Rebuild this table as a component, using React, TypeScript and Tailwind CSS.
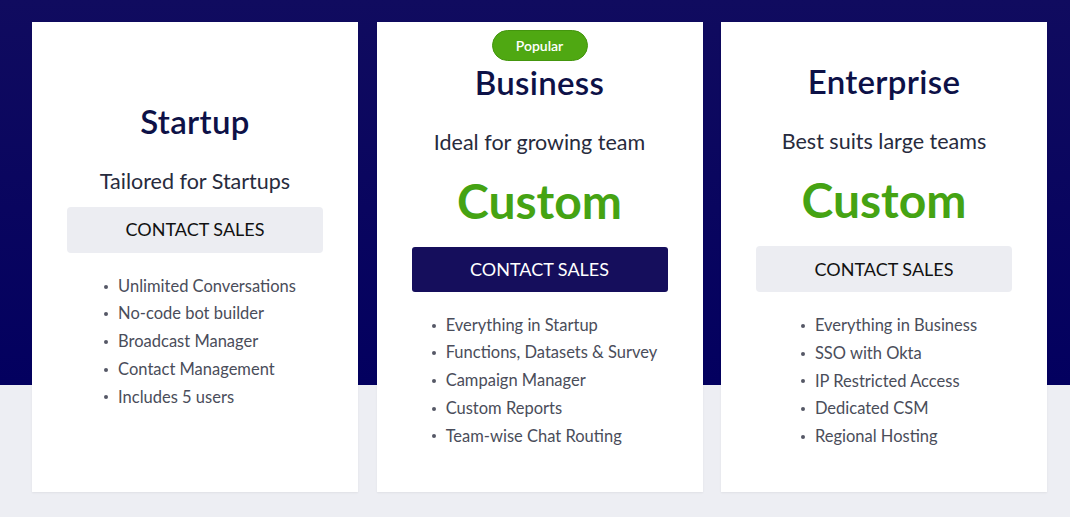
import React from "react";

interface Plan {
  name: string;
  tagline: string;
  price?: string;
  popular?: boolean;
  features: string[];
}

const plans: Plan[] = [
  {
    name: "Startup",
    tagline: "Tailored for Startups",
    features: [
      "Unlimited Conversations",
      "No-code bot builder",
      "Broadcast Manager",
      "Contact Management",
      "Includes 5 users",
    ],
  },
  {
    name: "Business",
    tagline: "Ideal for growing team",
    price: "Custom",
    popular: true,
    features: [
      "Everything in Startup",
      "Functions, Datasets & Survey",
      "Campaign Manager",
      "Custom Reports",
      "Team-wise Chat Routing",
    ],
  },
  {
    name: "Enterprise",
    tagline: "Best suits large teams",
    price: "Custom",
    features: [
      "Everything in Business",
      "SSO with Okta",
      "IP Restricted Access",
      "Dedicated CSM",
      "Regional Hosting",
    ],
  },
];

const PlanCard = ({ plan }: { plan: Plan }) => (
  <div className="relative flex h-[470px] w-[326px] flex-col justify-center bg-white px-[35px] text-center shadow-[0_1px_2px_rgba(0,0,0,0.06)]">
    {plan.popular && (
      <span className="absolute left-1/2 top-[8px] flex h-[31px] w-[96px] -translate-x-1/2 items-center justify-center rounded-full border border-[#44960e] bg-[#4fa812] text-[14px] font-semibold text-white">
        Popular
      </span>
    )}

    <h2 className="text-[33px] font-semibold leading-[36px] tracking-[0.3px] text-[#0d1147]">
      {plan.name}
    </h2>
    <p className="mt-[28px] text-[21.5px] leading-[28px] text-[#272b3d]">{plan.tagline}</p>

    {plan.price && (
      <p className="mb-[6px] mt-[17px] text-[48px] font-bold leading-[56px] text-[#45a313]">
        {plan.price}
      </p>
    )}

    <button
      className={
        plan.popular
          ? "mt-3 h-[45px] w-full rounded-[3px] bg-[#150e5c] text-[18px] text-white"
          : "mt-3 h-[46px] w-full rounded-[4px] bg-[#ecedf2] text-[18px] text-[#111]"
      }
    >
      CONTACT SALES
    </button>

    <ul className="mx-auto mt-[20px] w-fit pl-[10px] text-left">
      {plan.features.map((f) => (
        <li key={f} className="flex items-center gap-[10px] text-[16.5px] leading-[27.7px] text-[#4a4d5a]">
          <span className="h-[4px] w-[4px] rounded-full bg-[#555866]" />
          {f}
        </li>
      ))}
    </ul>
  </div>
);

const App = () => {
  return (
    <div
      className="min-h-[517px] bg-[linear-gradient(to_bottom,#100b5f_0px,#03005f_385px,#edeef3_385px)] pl-[32px] pt-[22px]"
      style={{ fontFamily: "Lato, 'Noto Sans', sans-serif" }}
    >
      <div className="flex gap-[18.5px]">
        {plans.map((plan) => (
          <PlanCard key={plan.name} plan={plan} />
        ))}
      </div>
    </div>
  );
};

export default App;
